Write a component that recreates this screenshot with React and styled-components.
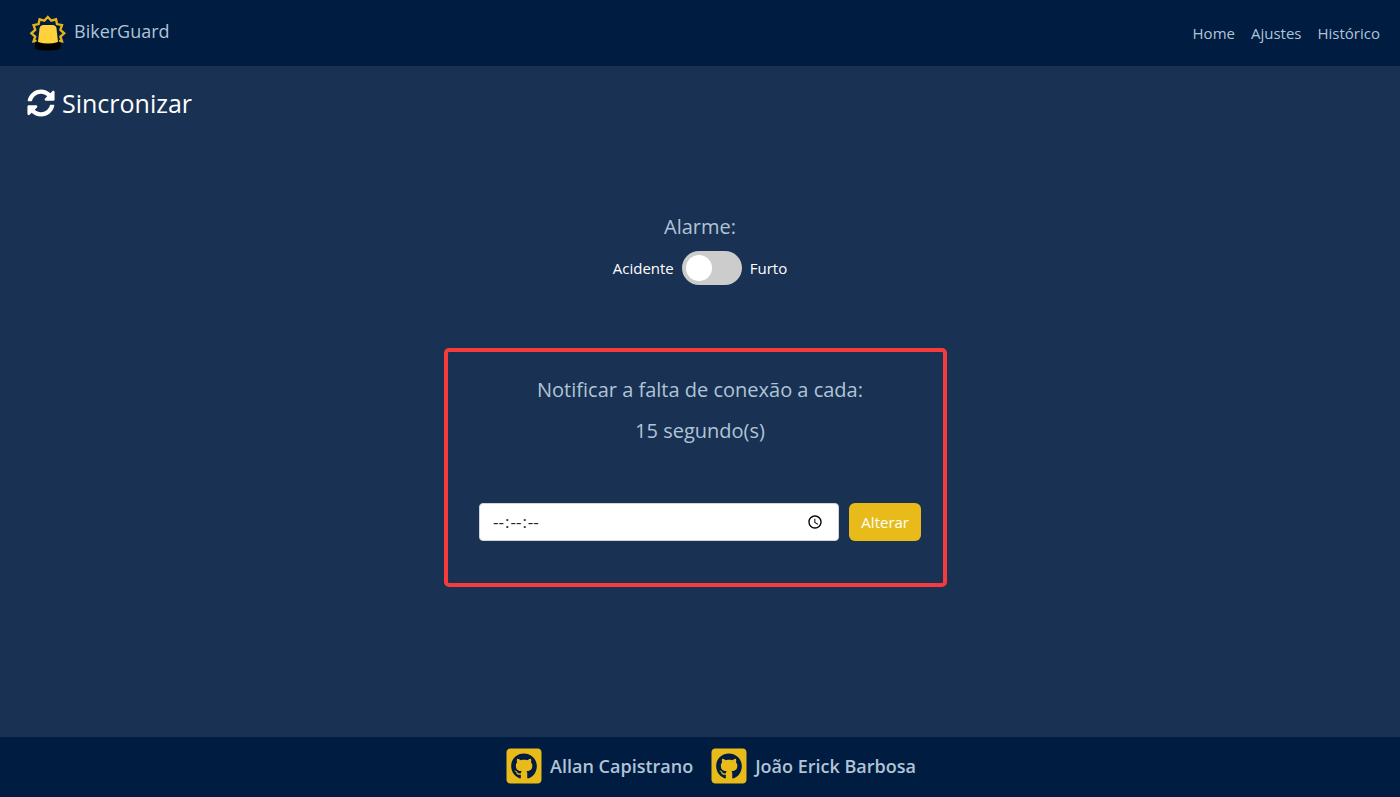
import React, { useState } from "react";
import styled, { createGlobalStyle } from "styled-components";
import { FaSyncAlt, FaGithubSquare } from "react-icons/fa";

const GlobalStyle = createGlobalStyle`
  *, *::before, *::after { box-sizing: border-box; }
  body {
    margin: 0;
    background: #193152;
    color: #ffffff;
    font-family: "Segoe UI", "Open Sans", "Noto Sans", sans-serif;
    font-size: 15px;
    line-height: 24px;
  }
  h1, h2, p { margin: 0; font-weight: 400; }
`;

const Page = styled.div`
  min-height: 100vh;
  display: flex;
  flex-direction: column;
`;

const Header = styled.header`
  display: flex;
  align-items: center;
  justify-content: space-between;
  height: 66px;
  padding: 0 20px 0 28px;
  background: #001c40;
`;

const Brand = styled.a`
  display: flex;
  align-items: center;
  gap: 6px;
  padding-bottom: 4px;
  color: #b0c4d8;
  font-size: 18px;
  text-decoration: none;

  svg { margin-top: 4px; }
`;

const Nav = styled.nav`
  display: flex;
  gap: 16px;
`;

const NavLink = styled.a`
  color: #b0c4d8;
  text-decoration: none;
`;

const Main = styled.main`
  flex: 1;
  display: flex;
  flex-direction: column;
  align-items: center;
`;

const SyncButton = styled.button`
  align-self: flex-start;
  display: flex;
  align-items: center;
  gap: 7px;
  margin: 20px 27px 0;
  padding: 0;
  border: 0;
  background: none;
  color: #ffffff;
  font: inherit;
  font-size: 25px;
  line-height: 34px;
  cursor: pointer;
`;

const Alarm = styled.section`
  display: flex;
  flex-direction: column;
  align-items: center;
  gap: 8px;
  margin-top: 90px;
`;

const Title = styled.h2`
  color: #b0c4d8;
  font-size: 20px;
  line-height: 33px;
  text-align: center;
`;

const SwitchRow = styled.label`
  display: flex;
  align-items: center;
  gap: 8px;
`;

const Switch = styled.input`
  appearance: none;
  width: 60px;
  height: 34px;
  margin: 0;
  padding: 4px;
  border-radius: 17px;
  background: #cccccc;
  cursor: pointer;

  &::before {
    content: "";
    display: block;
    width: 26px;
    height: 26px;
    border-radius: 50%;
    background: #ffffff;
  }
  &:checked { background: #e8bb1b; }
  &:checked::before { margin-left: 26px; }
`;

const Notify = styled.section`
  display: flex;
  flex-direction: column;
  gap: 8px;
  width: 100%;
  max-width: 503px;
  margin: 63px 9px 63px 0;
  padding: 21px 22px 42px 31px;
  border: 4px solid #f53b3b;
  border-radius: 5px;
`;

const Form = styled.form`
  display: flex;
  gap: 10px;
  margin-top: 48px;
`;

const TimeInput = styled.input`
  flex: 1;
  min-width: 0;
  height: 38px;
  padding: 6px 12px;
  border: 1px solid #ced4da;
  border-radius: 4px;
  background: #ffffff;
  color: #212529;
  font: inherit;
  font-size: 17px;

  &::-webkit-datetime-edit-ampm-field { display: none; }
  &::-webkit-calendar-picker-indicator { width: 16px; height: 16px; }
`;

const Submit = styled.button`
  height: 38px;
  padding: 0 12px;
  border: 0;
  border-radius: 6px;
  background: #e8bb1b;
  color: #ffffff;
  font: inherit;
  cursor: pointer;
`;

const Footer = styled.footer`
  display: flex;
  align-items: center;
  justify-content: center;
  gap: 16px;
  height: 60px;
  padding: 0 0 2px 20px;
  background: #001c40;
`;

const Author = styled.a`
  display: flex;
  align-items: center;
  gap: 6px;
  color: #b0c4d8;
  font-size: 18px;
  font-weight: 600;
  text-decoration: none;

  svg { color: #e8bb1b; }
`;

function Siren() {
  return (
    <svg width="40" height="42" viewBox="0 0 40 42" aria-hidden="true">
      <path
        d="M8.6 29 L5.6 29.4 L7.2 24.7 L3.4 21.3 L7.2 17.9 L5.6 13.2 L10.6 12.1 L11.6 7.3 L16.3 8.7 L19.8 5 L23.3 8.7 L28 7.3 L29 12.1 L34 13.2 L32.4 17.9 L36.2 21.3 L32.4 24.7 L34 29.4 L31 29"
        fill="none"
        stroke="#e3b21c"
        strokeWidth="2.4"
      />
      <path d="M7 30 Q20 27 32.5 30 L32.5 36 Q31 38.5 20 38.5 Q8 38.5 7 36 Z" fill="#000000" />
      <path d="M10 30 L11.5 16.5 Q12 13 15.5 13 L24.5 13 Q28 13 28.5 16.5 L30 30 Q20 33 10 30 Z" fill="#ffd23b" />
    </svg>
  );
}

export default function App() {
  const [theft, setTheft] = useState(false);
  const [time, setTime] = useState("");
  return (
    <Page>
      <GlobalStyle />
      <Header>
        <Brand href="#"><Siren />BikerGuard</Brand>
        <Nav>
          <NavLink href="#">Home</NavLink>
          <NavLink href="#ajustes">Ajustes</NavLink>
          <NavLink href="#historico">Histórico</NavLink>
        </Nav>
      </Header>
      <Main>
        <SyncButton type="button"><FaSyncAlt size={28} />Sincronizar</SyncButton>
        <Alarm>
          <Title>Alarme:</Title>
          <SwitchRow>
            <span>Acidente</span>
            <Switch type="checkbox" checked={theft} onChange={(e) => setTheft(e.target.checked)} />
            <span>Furto</span>
          </SwitchRow>
        </Alarm>
        <Notify>
          <Title as="label" htmlFor="interval">Notificar a falta de conexão a cada:</Title>
          <Title as="p">15 segundo(s)</Title>
          <Form onSubmit={(e) => e.preventDefault()}>
            <TimeInput id="interval" type="time" step="1" value={time} onChange={(e) => setTime(e.target.value)} />
            <Submit type="submit">Alterar</Submit>
          </Form>
        </Notify>
      </Main>
      <Footer>
        <Author href="#allan"><FaGithubSquare size={40} />Allan Capistrano</Author>
        <Author href="#joao"><FaGithubSquare size={40} />João Erick Barbosa</Author>
      </Footer>
    </Page>
  );
}
